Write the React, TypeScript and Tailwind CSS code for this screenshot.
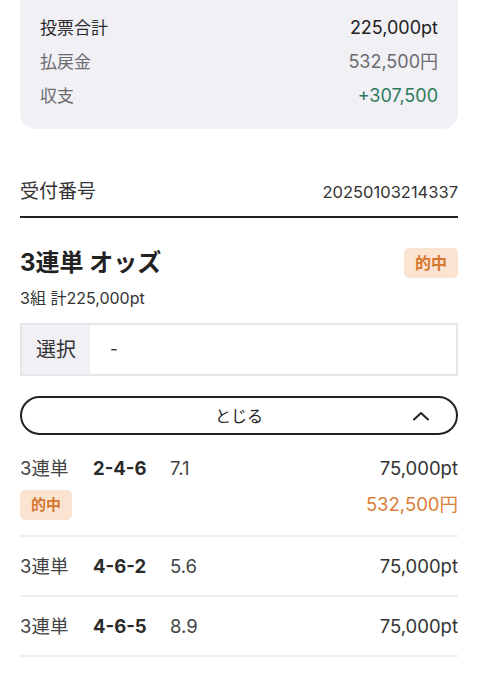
import React from "react";

const bets = [
  { type: "3連単", combo: "2-4-6", odds: "7.1", amount: "75,000pt", hit: true, payout: "532,500円" },
  { type: "3連単", combo: "4-6-2", odds: "5.6", amount: "75,000pt", hit: false, payout: "" },
  { type: "3連単", combo: "4-6-5", odds: "8.9", amount: "75,000pt", hit: false, payout: "" },
];

const HitBadge: React.FC<{ big?: boolean }> = ({ big }) => (
  <span
    className={`inline-flex items-center justify-center h-[30px] rounded-[5px] bg-[#fbe3d1] text-[#d6772f] font-semibold ${
      big ? "w-[54px] text-[16px]" : "w-[52px] text-[15px]"
    }`}
  >
    的中
  </span>
);

const App: React.FC = () => {
  return (
    <div
      className="min-h-screen bg-white px-5 text-[#2b2b2b] overflow-hidden"
      style={{ fontFamily: '"Inter", "Noto Sans CJK JP", sans-serif' }}
    >
      {/* 集計 */}
      <div className="-mt-3 bg-[#f0f0f5] rounded-2xl px-5 pt-7 pb-[21px] flex flex-col gap-[10px] text-[17px] leading-6">
        <div className="flex justify-between items-center">
          <span className="text-[#2b2b2b]">投票合計</span>
          <span className="text-[18px] text-[#222]">225,000pt</span>
        </div>
        <div className="flex justify-between items-center text-[#6b6b70]">
          <span>払戻金</span>
          <span className="text-[18px]">532,500円</span>
        </div>
        <div className="flex justify-between items-center">
          <span className="text-[#6b6b70]">収支</span>
          <span className="text-[18px] text-[#2f7a5c]">+307,500</span>
        </div>
      </div>

      {/* 受付番号 */}
      <div className="mt-[51px] pb-3 border-b-2 border-[#222] flex justify-between items-center h-[38px]">
        <span className="text-[19px] text-[#333]">受付番号</span>
        <span className="text-[16.5px] text-[#333]">20250103214337</span>
      </div>

      {/* タイトル */}
      <div className="mt-[30px] flex justify-between items-center h-[30px]">
        <h2 className="text-[24px] font-bold text-[#222]">3連単 オッズ</h2>
        <HitBadge big />
      </div>
      <p className="mt-[10px] text-[16px] leading-5 text-[#333]">3組 計225,000pt</p>

      {/* 選択 */}
      <div className="mt-[15px] h-[53px] border-2 border-[#e6e6ea] flex">
        <div className="w-[68px] bg-[#f0f0f5] flex items-center justify-center text-[20px] text-[#333]">選択</div>
        <div className="flex items-center pl-5 text-[17px] text-[#333]">-</div>
      </div>

      {/* とじる */}
      <button
        type="button"
        className="mt-5 w-full h-[39px] rounded-full border-2 border-[#222] relative flex items-center justify-center text-[16px] text-[#222]"
      >
        とじる
        <svg
          className="absolute right-[26px] top-1/2 -translate-y-1/2"
          width="18"
          height="10"
          viewBox="0 0 18 10"
          fill="none"
          stroke="#222"
          strokeWidth="2"
          strokeLinecap="round"
          strokeLinejoin="round"
        >
          <path d="M2 8.5 9 2l7 6.5" />
        </svg>
      </button>

      {/* 明細 */}
      <div className="mt-1">
        {bets.map((b) => (
          <div key={b.combo} className={`border-b-2 border-[#efeff2] pt-[18px] ${b.hit ? "pb-[15px]" : "pb-[16px]"}`}>
            <div className="flex items-center h-6 text-[18.5px]">
              <span className="w-[73px] text-[#444]">{b.type}</span>
              <span className="w-[77px] font-bold text-[#2b2b2b]">{b.combo}</span>
              <span className="text-[#444]">{b.odds}</span>
              <span className="ml-auto text-[#333]">{b.amount}</span>
            </div>
            {b.hit && (
              <div className="mt-[9px] flex items-center justify-between">
                <HitBadge />
                <span className="text-[18.5px] text-[#d9803a]">{b.payout}</span>
              </div>
            )}
          </div>
        ))}
      </div>
    </div>
  );
};

export default App;
